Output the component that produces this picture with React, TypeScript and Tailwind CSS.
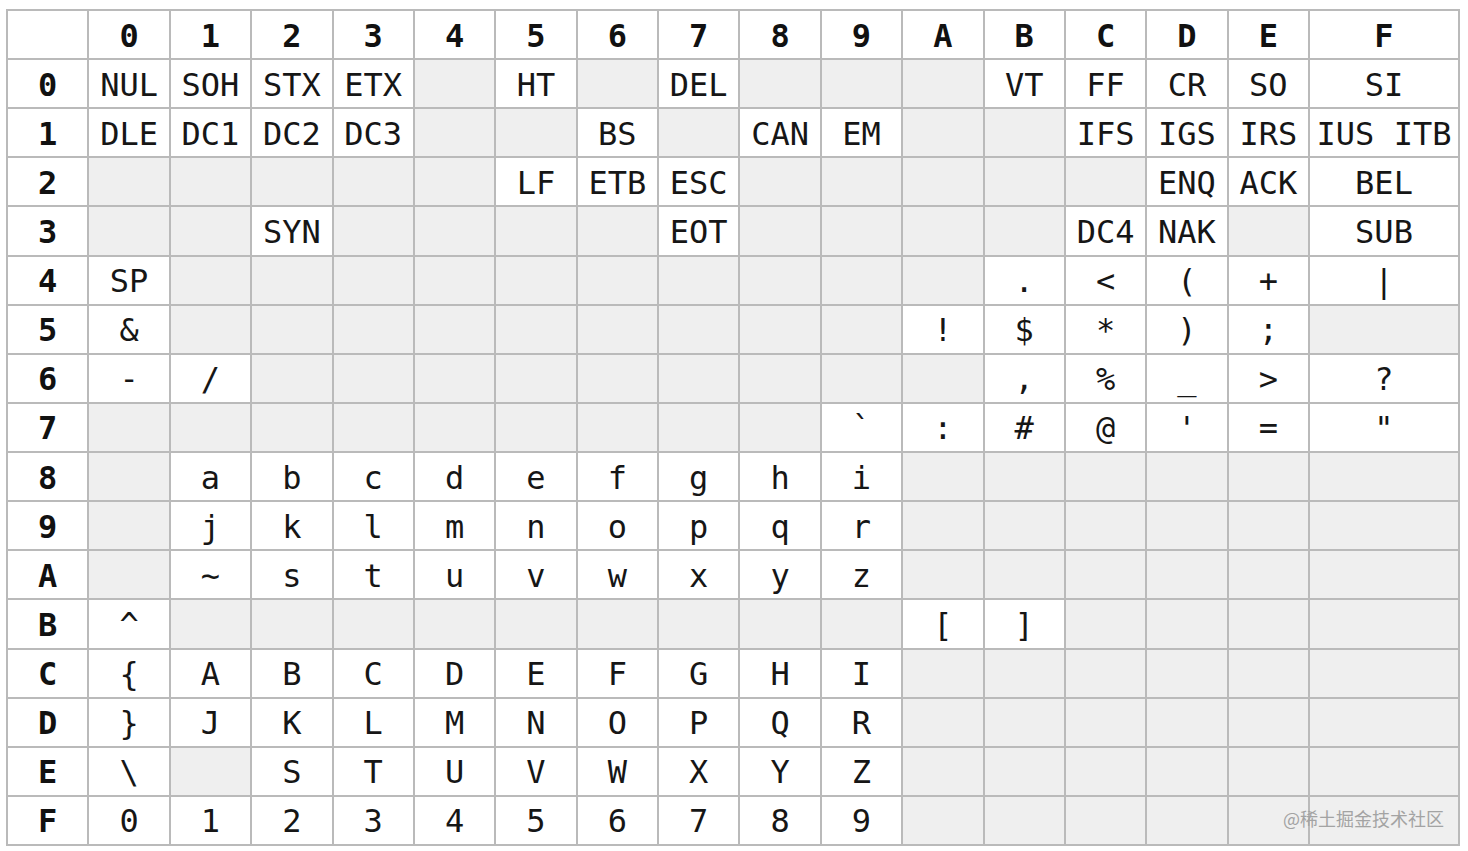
const HEX = ['0', '1', '2', '3', '4', '5', '6', '7', '8', '9', 'A', 'B', 'C', 'D', 'E', 'F']

type Cell = string | null

const g = (n: number): Cell[] => Array.from({ length: n }, () => null)

// null = unused (grey) cell
const ROWS: Cell[][] = [
  ['NUL', 'SOH', 'STX', 'ETX', null, 'HT', null, 'DEL', null, null, null, 'VT', 'FF', 'CR', 'SO', 'SI'],
  ['DLE', 'DC1', 'DC2', 'DC3', null, null, 'BS', null, 'CAN', 'EM', null, null, 'IFS', 'IGS', 'IRS', 'IUS ITB'],
  [null, null, null, null, null, 'LF', 'ETB', 'ESC', null, null, null, null, null, 'ENQ', 'ACK', 'BEL'],
  [null, null, 'SYN', null, null, null, null, 'EOT', null, null, null, null, 'DC4', 'NAK', null, 'SUB'],
  ['SP', ...g(10), '.', '<', '(', '+', '|'],
  ['&', ...g(9), '!', '$', '*', ')', ';', null],
  ['-', '/', ...g(9), ',', '%', '_', '>', '?'],
  [...g(9), '`', ':', '#', '@', "'", '=', '"'],
  [null, 'a', 'b', 'c', 'd', 'e', 'f', 'g', 'h', 'i', ...g(6)],
  [null, 'j', 'k', 'l', 'm', 'n', 'o', 'p', 'q', 'r', ...g(6)],
  [null, '~', 's', 't', 'u', 'v', 'w', 'x', 'y', 'z', ...g(6)],
  ['^', ...g(9), '[', ']', ...g(4)],
  ['{', 'A', 'B', 'C', 'D', 'E', 'F', 'G', 'H', 'I', ...g(6)],
  ['}', 'J', 'K', 'L', 'M', 'N', 'O', 'P', 'Q', 'R', ...g(6)],
  ['\\', null, 'S', 'T', 'U', 'V', 'W', 'X', 'Y', 'Z', ...g(6)],
  ['0', '1', '2', '3', '4', '5', '6', '7', '8', '9', ...g(6)],
]

function HeadCell({ children }: { children?: string }) {
  return (
    <div className="flex items-center justify-center bg-white pt-[2px] font-bold text-[#111]">
      {children}
    </div>
  )
}

function DataCell({ value }: { value: Cell }) {
  if (value === null) return <div className="bg-[#efefef]" />
  return (
    <div className="flex items-center justify-center overflow-visible whitespace-pre bg-white pt-[2px] text-[#161616]">
      {value}
    </div>
  )
}

export default function App() {
  return (
    <div className="relative h-[851px] w-[1468px] overflow-hidden bg-white">
      <div
        className="ml-[6px] mt-[9px] grid h-[837px] w-[1454px] grid-cols-[repeat(16,minmax(0,1fr))_148px] grid-rows-[repeat(17,minmax(0,1fr))] gap-[2px] bg-[#bababa] p-[2px] text-[32px] leading-none"
        style={{ fontFamily: '"DejaVu Sans Mono", "Liberation Mono", monospace' }}
      >
        <HeadCell />
        {HEX.map((h) => (
          <HeadCell key={'c' + h}>{h}</HeadCell>
        ))}
        {ROWS.map((row, r) => (
          <div key={r} className="contents">
            <HeadCell>{HEX[r]}</HeadCell>
            {row.map((v, c) => (
              <DataCell key={c} value={v} />
            ))}
          </div>
        ))}
      </div>
      <div
        className="absolute left-[1283px] top-[805px] text-[18px] text-[#a3a3a3]"
        style={{ fontFamily: '"Noto Sans CJK SC", "Noto Sans", sans-serif' }}
      >
        @稀土掘金技术社区
      </div>
    </div>
  )
}
